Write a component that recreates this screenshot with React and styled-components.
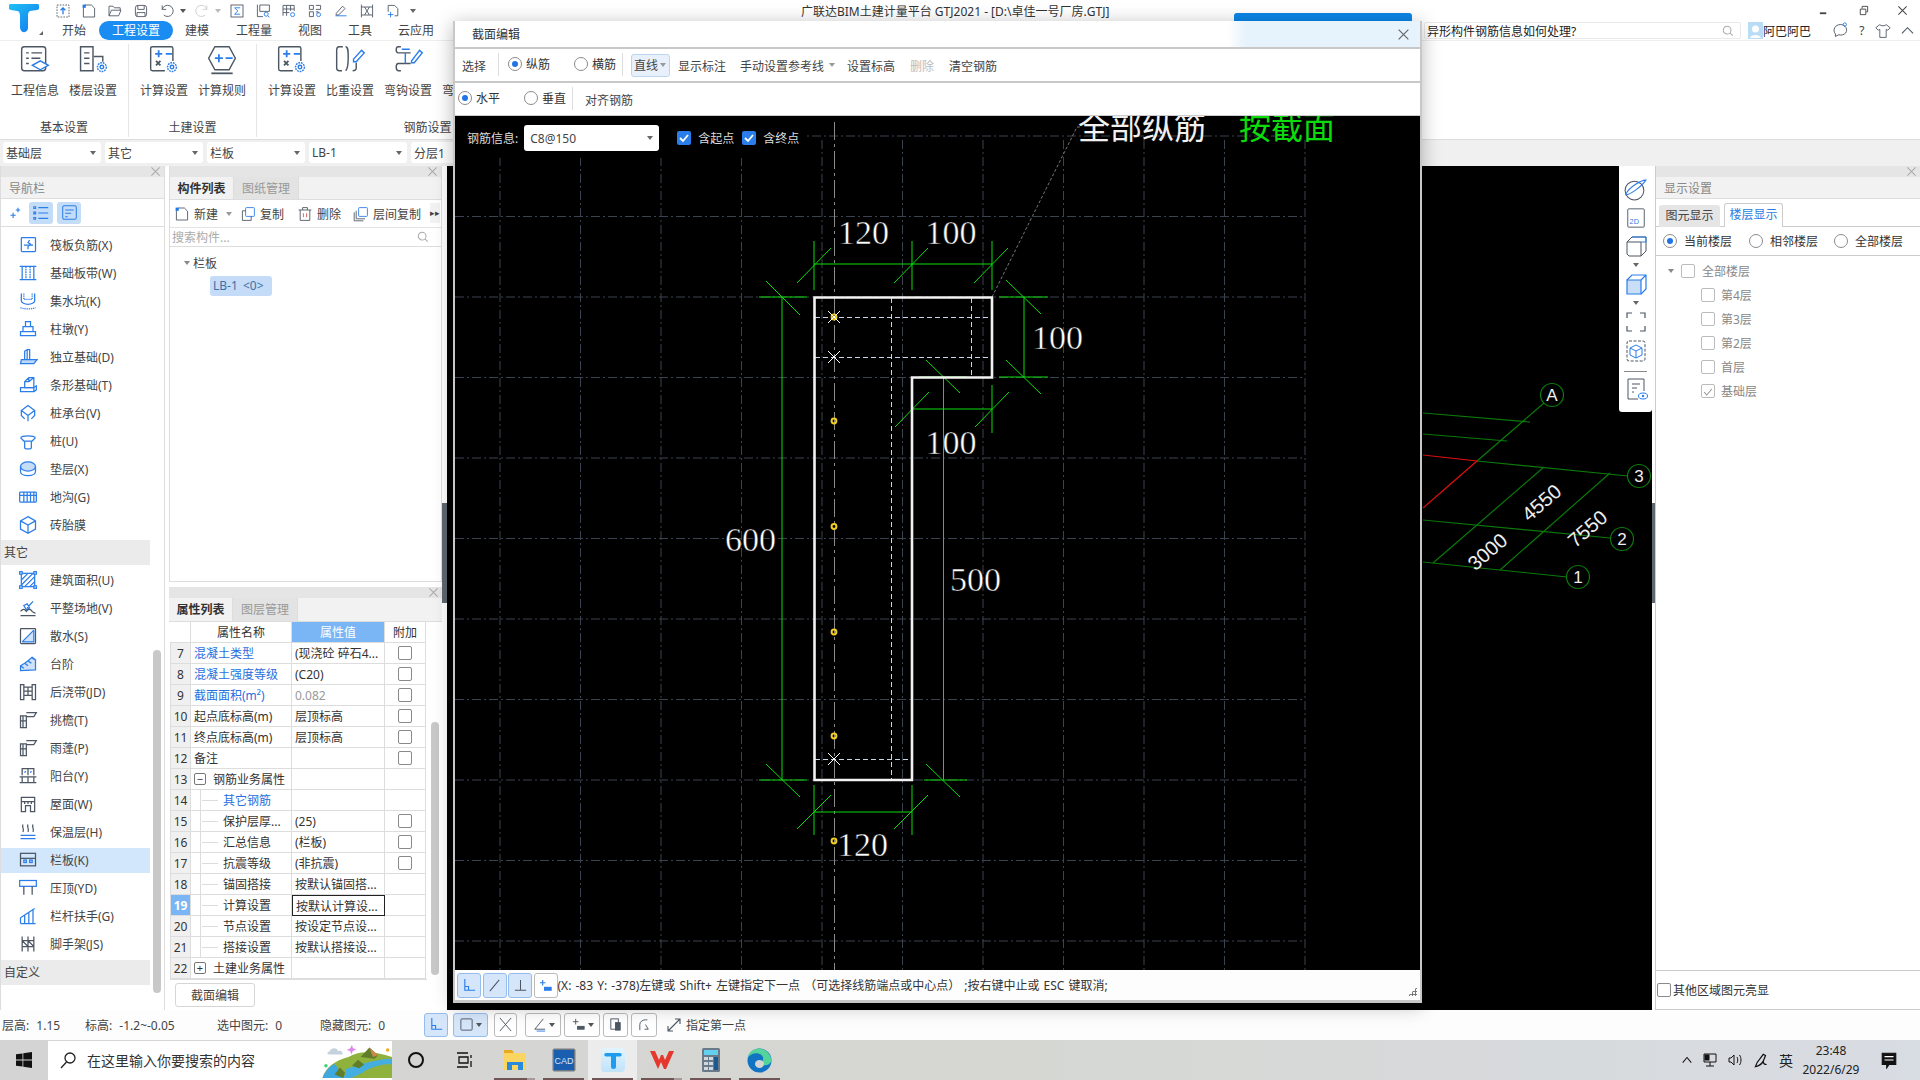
import React from 'react'
import styled, { createGlobalStyle } from 'styled-components'

const FONT = '"Noto Sans", "Noto Sans CJK SC", sans-serif'
const BLUE = '#2b7de9'
const GREY = '#4d5663'

const Global = createGlobalStyle`
html, body { margin: 0; padding: 0; background: #fff; }
* { box-sizing: border-box; }
`

const Screen = styled.div`
position: relative;
width: 1920px;
height: 1080px;
overflow: hidden;
display: flex;
flex-direction: column;
font-family: ${FONT};
font-size: 12px;
color: #444;
background: #fff;
`

/* ---- small bits ---- */
const Glyph = styled.svg.attrs((p) => ({ viewBox: p.$box || '0 0 24 24', fill: 'none' }))`
width: ${(p) => p.$size || 20}px;
height: ${(p) => p.$size || 20}px;
flex: none;
stroke: ${(p) => p.$color || BLUE};
stroke-width: ${(p) => p.$sw || 1.5};
`
const Caret = styled.i`
flex: none;
width: 0;
height: 0;
margin-left: ${(p) => p.$ml || 0}px;
border-left: 3px solid transparent;
border-right: 3px solid transparent;
border-top: 4px solid ${(p) => p.$color || '#666'};
`
const Cross = ({ size = 11, color = '#aaa' }) => (
  <Glyph $box="0 0 12 12" $size={size} $color={color} $sw={1.1}>
    <path d="M1.5 1.5l9 9M10.5 1.5l-9 9" />
  </Glyph>
)
const RadioRing = styled.span`
flex: none;
width: 14px;
height: 14px;
border-radius: 50%;
border: 1px solid #8c8c8c;
background: #fff;
display: flex;
align-items: center;
justify-content: center;
&::after {
  content: '';
  display: ${(p) => (p.$on ? 'block' : 'none')};
  width: 6px;
  height: 6px;
  border-radius: 50%;
  background: #2274e6;
}
`
const RadioItem = styled.label`
display: flex;
align-items: center;
gap: ${(p) => p.$gap || 4}px;
margin-left: ${(p) => p.$ml || 0}px;
color: #333;
`
const Radio = ({ on, ml, gap, children }) => (
  <RadioItem $ml={ml} $gap={gap}>
    <RadioRing $on={on} />
    {children}
  </RadioItem>
)
const Box = styled.span`
flex: none;
display: block;
width: 14px;
height: 14px;
border-radius: 2px;
border: 1px solid ${(p) => p.$line || '#8a8a8a'};
background: #fff;
`

/* ---- title + ribbon ---- */
const Top = styled.header`
position: relative;
height: 41px;
flex: none;
display: flex;
border-bottom: 1px solid #eee;
`
const Logo = styled.div`
width: 50px;
padding: 4px 0 0 9px;
flex: none;
position: relative;
&::after {
  content: '';
  position: absolute;
  left: 39px;
  top: 31px;
  border-left: 4px solid transparent;
  border-bottom: 4px solid #666;
}
`
const TopBody = styled.div`
flex: 1;
display: flex;
flex-direction: column;
`
const QuickRow = styled.div`
height: 21px;
display: flex;
align-items: center;
`
const QuickSlot = styled.span`
width: ${(p) => (p.$wide ? 35 : 26)}px;
display: flex;
justify-content: ${(p) => (p.$wide ? 'flex-start' : 'center')};
padding-left: ${(p) => (p.$wide ? 5 : 0)}px;
align-items: center;
gap: 2px;
`
const AppTitle = styled.div`
margin-left: 385px;
width: 340px;
font-size: 12px;
color: #333;
white-space: nowrap;
`
const WinButtons = styled.div`
margin-left: auto;
width: 102px;
padding-right: 12px;
display: flex;
align-items: center;
justify-content: space-between;
`
const TabRow = styled.div`
height: 19px;
display: flex;
align-items: center;
`
const Tab = styled.span`
height: 19px;
line-height: 20px;
padding: 0 ${(p) => (p.$active ? 13 : 0)}px;
margin-left: ${(p) => p.$ml}px;
border-radius: 10px;
white-space: nowrap;
background: ${(p) => (p.$active ? '#1a8cf2' : 'transparent')};
color: ${(p) => (p.$active ? '#fff' : '#444')};
`
const HelpBar = styled.div`
margin-left: auto;
display: flex;
align-items: center;
padding-right: 6px;
`
const HelpSearch = styled.div`
width: 317px;
height: 17px;
border: 1px solid #eaeaea;
border-radius: 2px;
padding: 0 6px 0 2px;
display: flex;
align-items: center;
justify-content: space-between;
color: #222;
`
const UserChip = styled.div`
margin-left: 7px;
width: 84px;
display: flex;
align-items: center;
color: #222;
`
const Avatar = styled.span`
width: 15px;
height: 17px;
background: #b9dcf7;
display: flex;
justify-content: center;
align-items: center;
`
const HelpIcons = styled.div`
width: 82px;
display: flex;
align-items: center;
justify-content: space-between;
`
const NoticeEdge = styled.div`
position: absolute;
left: 1234px;
top: 13px;
width: 178px;
height: 8px;
background: #0b86e8;
border-radius: 3px 3px 0 0;
`
const Ribbon = styled.section`
flex: none;
height: 98px;
display: flex;
`
const RibbonGroup = styled.div`
width: ${(p) => p.$w}px;
flex: none;
border-right: 1px solid #e6e6e6;
margin: 3px 0 2px;
display: flex;
flex-direction: column;
align-items: center;
justify-content: space-between;
`
const RibbonItems = styled.div`
display: flex;
align-self: flex-start;
padding-left: 6px;
`
const RibbonItem = styled.div`
width: 58px;
display: flex;
flex-direction: column;
align-items: center;
gap: 5px;
white-space: nowrap;
`
const RibbonLabel = styled.div`
line-height: 18px;
`
const SelectorRow = styled.div`
flex: none;
height: 27px;
background: #f0f0f0;
border-top: 1px solid #ddd;
padding: 2px 0 0 3px;
display: flex;
gap: 4px;
`
const FloorSelect = styled.div`
width: 98px;
height: 21px;
background: #fff;
border-radius: 3px;
padding: 0 5px 0 3px;
display: flex;
align-items: center;
justify-content: space-between;
color: #444;
`

/* ---- main area ---- */
const Main = styled.main`
flex: none;
height: 844px;
display: flex;
`
const StripHead = styled.div`
height: 11px;
background: #e5e5e5;
display: flex;
align-items: center;
justify-content: flex-end;
padding-right: 3px;
flex: none;
`
const PanelTitle = styled.div`
height: 22px;
line-height: 23px;
padding-left: 8px;
background: #f2f2f2;
color: #888;
border-bottom: 1px solid #ddd;
flex: none;
`
const Nav = styled.nav`
position: relative;
width: 165px;
flex: none;
border-left: 1px solid #ddd;
border-right: 1px solid #ddd;
display: flex;
flex-direction: column;
`
const NavTools = styled.div`
height: 28px;
flex: none;
display: flex;
align-items: center;
padding-left: 8px;
gap: 4px;
border-bottom: 1px solid #ddd;
`
const NavToolBtn = styled.span`
width: 24px;
height: 22px;
border-radius: 3px;
background: ${(p) => (p.$on ? '#c3dcf7' : 'transparent')};
margin-left: ${(p) => p.$ml || 0}px;
display: flex;
align-items: center;
justify-content: center;
`
const NavList = styled.div`
padding-top: 4px;
`
const NavRow = styled.div`
width: 149px;
padding-left: 17px;
display: flex;
align-items: center;
gap: 12px;
white-space: nowrap;
color: #444;
background: ${(p) => (p.$on ? '#d2e6fc' : 'transparent')};
height: ${(p) => (p.$on ? 25 : 28)}px;
margin: ${(p) => (p.$on ? '1.5px 0' : 0)};
`
const NavHead = styled.div`
height: 25px;
width: 149px;
background: #ebebeb;
line-height: 25px;
padding-left: 3px;
margin: ${(p) => p.$m || 0};
`
const NavScroll = styled.div`
position: absolute;
right: 3px;
top: 484px;
width: 8px;
height: 343px;
border-radius: 4px;
background: #c8c8c8;
`
const Middle = styled.div`
width: 273px;
flex: none;
margin-left: 4px;
display: flex;
flex-direction: column;
`
const ComponentPane = styled.section`
height: 416px;
flex: none;
display: flex;
flex-direction: column;
border: 1px solid #ddd;
border-top: 0;
`
const PaneTabs = styled.div`
height: ${(p) => p.$h || 23}px;
flex: none;
display: flex;
background: #f2f2f2;
border-bottom: 1px solid #ddd;
`
const PaneTab = styled.span`
width: ${(p) => (p.$on ? 64 : 65)}px;
text-align: center;
line-height: 24px;
font-weight: ${(p) => (p.$on ? 700 : 400)};
color: ${(p) => (p.$on ? '#333' : '#999')};
background: ${(p) => (p.$on ? '#f2f2f2' : '#e3e3e3')};
border-right: 1px solid #ddd;
`
const PaneTools = styled.div`
height: 28px;
flex: none;
display: flex;
align-items: center;
padding-left: 4px;
border-bottom: 1px solid #e4e4e4;
position: relative;
`
const PaneTool = styled.span`
display: flex;
align-items: center;
gap: 4px;
margin-left: ${(p) => p.$ml || 0}px;
white-space: nowrap;
`
const MoreTab = styled.span`
position: absolute;
right: 1px;
top: 3px;
width: 10px;
height: 20px;
background: #f2f2f2;
font-size: 9px;
line-height: 20px;
text-align: center;
`
const SearchRow = styled.div`
height: 19px;
flex: none;
display: flex;
align-items: center;
justify-content: space-between;
padding: 0 12px 0 2px;
color: #aaa;
border-bottom: 1px solid #ddd;
`
const TreeHead = styled.div`
padding: 5px 0 0 14px;
display: flex;
align-items: center;
gap: 3px;
height: 26px;
`
const Chip = styled.div`
margin: 3px 0 0 40px;
width: 62px;
height: 20px;
line-height: 20px;
padding-left: 3px;
border-radius: 3px;
background: #c4dcf8;
color: #3f6ea5;
word-spacing: 2px;
`
const PropPane = styled.section`
position: relative;
margin-top: 5px;
flex: 1;
display: flex;
flex-direction: column;
`
const PropTable = styled.div`
display: grid;
grid-template-columns: 21px 101px 93px 41px;
width: 257px;
margin-left: 1px;
border-bottom: 1px solid #ddd;
`
const HeadCell = styled.div`
height: 21px;
line-height: 21px;
text-align: center;
color: ${(p) => (p.$on ? '#fff' : '#333')};
background: ${(p) => (p.$on ? '#7ab5f5' : '#fff')};
border-right: 1px solid #ddd;
border-bottom: 1px solid #ddd;
`
const NumCell = styled.div`
height: 21px;
line-height: 21px;
text-align: center;
font-weight: ${(p) => (p.$on ? 700 : 400)};
color: ${(p) => (p.$on ? '#fff' : '#333')};
background: ${(p) => (p.$on ? '#7ab5f5' : '#f0f0f0')};
border: 1px solid #ddd;
border-top: 0;
`
const NameCell = styled.div`
height: 21px;
line-height: 21px;
padding-left: ${(p) => (p.$indent ? 32 : p.$group ? 22 : 3)}px;
color: ${(p) => (p.$link ? '#2a6fe0' : '#333')};
border-right: 1px solid #ddd;
border-bottom: 1px solid #ddd;
white-space: nowrap;
overflow: hidden;
position: relative;
&::before {
  content: '';
  display: ${(p) => (p.$indent ? 'block' : 'none')};
  position: absolute;
  left: 9px;
  top: 0;
  height: 21px;
  width: 17px;
  border-left: 1px solid #ddd;
  background: linear-gradient(#ddd, #ddd) 1px 10px / 100% 1px no-repeat;
}
`
const Fold = styled.span`
position: absolute;
left: 3px;
top: 4px;
width: 12px;
height: 12px;
border: 1px solid #777;
border-radius: 2px;
font-size: 11px;
line-height: 9px;
text-align: center;
background: #fff;
`
const ValueCell = styled.div`
height: 21px;
line-height: 21px;
padding-left: 3px;
white-space: nowrap;
overflow: hidden;
color: ${(p) => (p.$muted ? '#999' : '#333')};
border: ${(p) => (p.$on ? '1px solid #222' : 'none')};
border-right: 1px solid ${(p) => (p.$on ? '#222' : '#ddd')};
border-bottom: 1px solid ${(p) => (p.$on ? '#222' : '#ddd')};
`
const AddCell = styled.div`
height: 21px;
display: flex;
align-items: center;
justify-content: center;
border-right: 1px solid #ddd;
border-bottom: 1px solid #ddd;
`
const PropScroll = styled.div`
position: absolute;
right: 3px;
top: 135px;
width: 8px;
height: 253px;
border-radius: 4px;
background: #c8c8c8;
`
const EditButton = styled.div`
margin: 3px 0 0 6px;
width: 80px;
height: 24px;
line-height: 23px;
text-align: center;
border: 1px solid #d6d6d6;
border-radius: 3px;
background: #fff;
`
const Splitter = styled.div`
width: ${(p) => p.$w}px;
flex: none;
display: flex;
align-items: center;
&::after {
  content: '';
  display: block;
  width: 100%;
  height: 100px;
  margin-top: -70px;
  background: #5f6770;
}
`
const BlackView = styled.div`
position: relative;
flex: 1;
background: #000;
`
const AxisSvg = styled.svg`
position: absolute;
left: 0;
top: 0;
display: block;
`
const ViewTools = styled.div`
position: absolute;
right: 0;
top: 0;
width: 33px;
height: 246px;
background: #fff;
border-radius: 0 0 3px 3px;
padding-top: 11px;
display: flex;
flex-direction: column;
align-items: center;
gap: 5px;
`
const ViewRule = styled.div`
width: 23px;
height: 1px;
background: #888;
margin-top: 3px;
`
const RightPanel = styled.aside`
width: 265px;
flex: none;
border-left: 1px solid #ccc;
display: flex;
flex-direction: column;
`
const DisplayTabs = styled.div`
height: 28px;
flex: none;
padding: 5px 0 0 3px;
display: flex;
align-items: flex-end;
gap: 4px;
border-bottom: 1px solid #ccc;
`
const DisplayTab = styled.span`
height: ${(p) => (p.$on ? 24 : 22)}px;
width: ${(p) => (p.$on ? 59 : 61)}px;
line-height: 22px;
text-align: center;
color: ${(p) => (p.$on ? '#2a7de1' : '#444')};
background: ${(p) => (p.$on ? '#fff' : '#e5e5e5')};
border: ${(p) => (p.$on ? '1px solid #ccc' : '0')};
border-bottom: 0;
border-radius: 3px 3px 0 0;
margin-bottom: -1px;
`
const FloorRadios = styled.div`
height: 29px;
flex: none;
display: flex;
align-items: center;
padding-left: 7px;
border-bottom: 1px solid #ccc;
`
const FloorTree = styled.div`
flex: 1;
padding-top: 3px;
color: #888;
border-bottom: 1px solid #ccc;
`
const FloorRow = styled.div`
height: 24px;
display: flex;
align-items: center;
gap: ${(p) => (p.$root ? 7 : 6)}px;
padding-left: ${(p) => (p.$root ? 12 : 45)}px;
`
const FloorBottom = styled.div`
height: 39px;
flex: none;
display: flex;
align-items: center;
gap: 2px;
padding-left: 1px;
border-bottom: 1px solid #ccc;
color: #333;
`

/* ---- dialog ---- */
const Dialog = styled.div`
position: absolute;
left: 453px;
top: 21px;
width: 969px;
height: 982px;
background: #fff;
border: 2px solid #c8c8c8;
border-top: 0;
border-bottom-width: 3px;
box-shadow: 0 3px 18px rgba(0, 0, 0, 0.28);
display: flex;
flex-direction: column;
`
const DialogHead = styled.div`
height: 26px;
flex: none;
display: flex;
align-items: center;
justify-content: space-between;
padding: 0 10px 0 17px;
color: #333;
background: linear-gradient(90deg, #fff 0, #fff 80%, #e6f2fc 82%, #e6f2fc 100%);
`
const DialogRow = styled.div`
height: 34px;
flex: none;
display: flex;
align-items: center;
padding-left: ${(p) => p.$pl}px;
border-top: 2px solid #c8c8c8;
white-space: nowrap;
label {
  margin-top: -2px;
}
`
const RowText = styled.span`
margin-left: ${(p) => p.$ml || 0}px;
color: ${(p) => (p.$off ? '#bbb' : '#444')};
margin-top: 2px;
`
const RowSep = styled.span`
align-self: stretch;
width: 1px;
background: #ddd;
margin: 4px 0 5px ${(p) => p.$ml}px;
`
const LineButton = styled.span`
margin-left: ${(p) => p.$ml}px;
width: 39px;
height: 23px;
border: 1px solid #bcd6ef;
border-radius: 3px;
background: #e8f1fb;
display: flex;
align-items: center;
gap: 2px;
padding-left: 2px;
`
const DrawArea = styled.div`
position: relative;
height: 855px;
flex: none;
background: #000;
border-top: 1px solid #ccc;
`
const DrawSvg = styled.svg`
display: block;
`
const SteelBar = styled.div`
position: absolute;
left: 0;
top: 0;
width: 350px;
height: 42px;
background: #000;
display: flex;
align-items: center;
padding: 2px 0 0 12px;
color: #ddd;
white-space: nowrap;
`
const SteelSelect = styled.div`
margin-left: 6px;
width: 135px;
height: 26px;
border-radius: 3px;
background: #fff;
color: #444;
display: flex;
align-items: center;
justify-content: space-between;
padding: 0 6px;
`
const CheckBlue = styled.span`
margin-left: ${(p) => p.$ml}px;
width: 14px;
height: 14px;
border-radius: 2px;
background: #2b7de9;
margin-right: 7px;
flex: none;
display: flex;
`
const HintBar = styled.div`
flex: none;
height: 30px;
display: flex;
align-items: center;
padding-left: 2px;
background: #fdfdfd;
color: #333;
white-space: pre;
word-spacing: 1px;
position: relative;
`
const SnapBtn = styled.span`
width: ${(p) => p.$w || 24}px;
height: ${(p) => p.$h || 24}px;
margin-right: ${(p) => p.$mr ?? 1.5}px;
flex: none;
border-radius: 3px;
border: 1px solid ${(p) => (p.$on ? '#94bdee' : '#bbb')};
background: ${(p) => (p.$on ? '#d6e6fa' : '#fff')};
display: flex;
align-items: center;
justify-content: center;
gap: 2px;
`
const Grip = styled.span`
position: absolute;
right: 3px;
bottom: 4px;
width: 9px;
height: 9px;
background-image: radial-gradient(#777 1px, transparent 1.2px);
background-size: 3px 3px;
clip-path: polygon(100% 0, 100% 100%, 0 100%);
`

/* ---- status + taskbar ---- */
const Status = styled.div`
flex: none;
height: 30px;
display: flex;
align-items: center;
background: #fdfdfd;
white-space: nowrap;
color: #444;
padding: 0 0 1px 2px;
`
const StatusText = styled.span`
width: ${(p) => p.$w}px;
flex: none;
word-spacing: 4px;
`
const StatusHint = styled.span`
margin-left: 4px;
`
const Taskbar = styled.footer`
flex: none;
height: 40px;
display: flex;
align-items: center;
background: linear-gradient(90deg, #d4d4d4, #d6d7d2 50%, #d8dce3);
color: #222;
`
const StartSlot = styled.div`
width: 48px;
display: flex;
justify-content: center;
`
const TaskSearch = styled.div`
width: 344px;
height: 39px;
margin-top: 1px;
background: #fff;
position: relative;
display: flex;
align-items: center;
gap: 10px;
padding: 0 0 2px 11px;
font-size: 14px;
overflow: hidden;
color: #333;
`
const Landscape = styled.svg`
position: absolute;
right: 0;
top: 0;
`
const TaskSlot = styled.div`
position: relative;
width: ${(p) => (p.$run ? 49 : 48)}px;
height: 40px;
flex: none;
display: flex;
align-items: center;
justify-content: center;
margin-left: ${(p) => p.$ml || 0}px;
background: ${(p) => (p.$on ? '#ececec' : 'transparent')};
&::after {
  content: '';
  display: ${(p) => (p.$run ? 'block' : 'none')};
  position: absolute;
  left: 4px;
  right: 4px;
  bottom: 0;
  height: 2px;
  background: ${(p) => (p.$multi ? 'linear-gradient(90deg, #6f5555 80%, #a89a9a 80%)' : '#6f5555')};
}
`
const Tray = styled.div`
margin-left: auto;
display: flex;
align-items: center;
gap: 9px;
padding-right: 22px;
`
const TrayIme = styled.span`
font-size: 14px;
`
const Clock = styled.div`
width: 72px;
margin: 0 4px 0 -7px;
text-align: center;
line-height: 19px;
`

/* ---- icons ---- */
const quick = [
  <><rect x="2.5" y="2.5" width="15" height="15" strokeDasharray="2 1.5" /><path d="M10 14V6M7 9l3-3 3 3" stroke="#1f7bea" strokeWidth="1.6" /></>,
  <><path d="M5 2.5h8l4 4v11H3v-13" /><rect x="2" y="2" width="4" height="4" fill="#1f7bea" stroke="none" /></>,
  <path d="M2.5 16V4h5l2 2h7v3M2.5 16l3-7h12l-3 7z" />,
  <><rect x="3" y="3" width="14" height="14" rx="3" /><path d="M6 3v5h8V3M5 17v-5h10v5" /></>,
  <path d="M4 3v5h5M4 8a7 7 0 1 1 2 7" />,
  <path d="M16 3v5h-5M16 8a7 7 0 1 0-2 7" stroke="#ccc" />,
  <><rect x="2.5" y="2.5" width="15" height="15" /><path d="M14 6H7l4 4-4 4h7" stroke="#1f7bea" /></>,
  <><path d="M3 2v15h7M6 2.500h12v8H6z" /><circle cx="14" cy="14" r="2.500" stroke="#1f7bea" /><path d="M16 16l2 2" stroke="#1f7bea" /></>,
  <><path d="M2.500 16V3h14v7M2.500 7.500h14M2.500 12h8M7 3v13M12 3v7" /><circle cx="14.500" cy="14.500" r="2.500" stroke="#1f7bea" /></>,
  <><path d="M3 3h5v5H3zM3 11h5v6H3zM11 11h3v2" /><circle cx="14.500" cy="14.500" r="2.500" stroke="#1f7bea" /><path d="M11 3h6v5h-6" /></>,
  <><path d="M3 16h14" stroke="#1f7bea" /><path d="M4 13l8-9 3 3-8 8H4z" /></>,
  <><path d="M3 2v16M17 2v16M3 5h14M3 15h14M7 5l6 10M7 15l6-10" /></>,
  <><path d="M4 11V3h8l4 4v9h-4" /><path d="M7 11v7M3.500 14.500h7" stroke="#1f7bea" /></>,
]
const ribbonShapes = {
  info: <><rect x="3" y="3" width="27" height="27" rx="3" /><path d="M8 10h3M14 10h12M8 16h3M14 16h10M8 22h3" /><path d="M24 19l9 5-9 5-9-5z" fill="#fff" stroke={BLUE} /></>,
  floor: <><path d="M19 30H4V3h14v27M19 14h10v6" /><path d="M8 10h6M8 16h6M8 22h6" /><circle cx="28" cy="26" r="5" stroke={BLUE} strokeDasharray="2 1" /><circle cx="28" cy="26" r="2" stroke={BLUE} /></>,
  calc: <><path d="M19 30H5a2 2 0 0 1-2-2V5a2 2 0 0 1 2-2h21a2 2 0 0 1 2 2v14" /><path d="M8 11h8M12 7v8M20 11h7" stroke={BLUE} strokeWidth="2" /><path d="M9 19l5 5M14 19l-5 5" strokeWidth="2" /><circle cx="27" cy="26" r="5" stroke={BLUE} strokeDasharray="2 1" /><circle cx="27" cy="26" r="2" stroke={BLUE} /></>,
  rule: <><path d="M10 3h16l7 13-7 13H10L3 16z" /><path d="M10 16h9M14.500 11.500v9M22 16h8" stroke={BLUE} strokeWidth="2" /><path d="M6 33h24" strokeWidth="2" /></>,
  weight: <><path d="M10 3H6c-2 0-3 2-3 4v20c0 2 1 3 3 3h3" /><path d="M13 3c3 0 3 5 3 12s0 13-3 15" /><path d="M21 30c3 0 4-1 4-3v-6" /><path d="M22 17l9-10 3 3-9 10h-3z" stroke={BLUE} /></>,
  hook: <><path d="M10 3H7c-3 0-3 7 0 7h14M10 30H7c-3 0-3-8 0-8h14" /><path d="M15 10v12M11 6h9" stroke={BLUE} /><path d="M22 19l9-12 3 3-9 11h-3z" stroke={BLUE} /></>,
}
const navShapes = {
  raft: <><rect x="4" y="3" width="17" height="17" rx="1" /><path d="M7 12h11M14 6l-2 3 3 2-3 3v3" /></>,
  band: <><path d="M2 4h20M2 20h20M5 4v16M19 4v16" /><path d="M9.500 4v16M14.500 4v16" strokeDasharray="2 1" /></>,
  pit: <><path d="M4 3v9c0 2 4 4 8 4s8-2 8-4V3" /><path d="M7 3v7h10V3M3 20c5 2 13 2 18 0" strokeDasharray="1.500 1" /></>,
  pier: <><path d="M9 3h6v6H9zM6 9h12v6H6zM3 15h18v5H3z" /></>,
  found: <><path d="M8 5l3-2h3v12H8zM11 3v12" /><path d="M4 15h19l-4 5H3z" fill="#bcd8f7" /></>,
  strip: <><path d="M8 8l5-5h6v12H8zM13 3v5H8M19 3l-6 5" /><path d="M8 15h11v5H3v-5zM19 15l3-2v5l-3 2" /></>,
  cap: <><path d="M12 3l8 6-8 6-8-6zM4 9v6l4 4M20 9v6l-4 4M12 15v7" /></>,
  pile: <><path d="M3 8c2-3 16-3 18 0M3 8l4 4h10l4-4M8 12v8c0 2 8 2 8 0v-8" /></>,
  cushion: <><ellipse cx="12" cy="9" rx="9" ry="5.500" fill="#c4dcf8" /><path d="M3 9v6c0 3 4 5 9 5s9-2 9-5V9" /></>,
  ditch: <><rect x="2" y="6" width="20" height="12" rx="1" /><path d="M2 10h20M7 6v12M11 6v12M15 6v12M19 6v12" /></>,
  mold: <><path d="M12 2l9 5v10l-9 5-9-5V7zM3 7l9 5 9-5M12 12v10" /></>,
  area: <><rect x="4" y="4" width="16" height="16" /><path d="M4 12l8-8M4 18L18 4M8 20L20 8M14 20l6-6" /><rect x="2" y="2" width="3" height="3" fill="#fff" /><rect x="19" y="2" width="3" height="3" fill="#fff" /><rect x="2" y="19" width="3" height="3" fill="#fff" /><rect x="19" y="19" width="3" height="3" fill="#fff" /></>,
  level: <><path d="M11 12l7-8M7 9l4-2 3 5-4 2z" /><path d="M3 16c3-3 5-3 7 0 2-3 5-3 7 0 1 1 3 2 4 2M3 21h18" stroke={GREY} /></>,
  apron: <><rect x="3" y="3" width="18" height="18" rx="1" stroke={GREY} /><path d="M5 19L19 5M5 19h14V5" fill="#cfe2f9" /></>,
  steps: <><path d="M3 14l5-3 4-3 5-4 4 3v12l-18 1z" fill="#cfe2f9" /><path d="M3 14l4 3M8 11l4 3M12 8l4 3M16 4l4 3" /></>,
  strip2: <><path d="M3 3h4v18H3zM17 3h4v18h-4zM7 6h10M7 11h10M7 16h10M12 6v10" stroke={GREY} /></>,
  eave: <><path d="M3 7h3v14H3zM6 7h4v14H6zM3 13h7M10 3h12l-3 5h-9" stroke={GREY} /></>,
  balcony: <><path d="M5 11V3h14v8M12 3v8M2 13h20M2 20h20M5 13v7M12 13v7M19 13v7" stroke={GREY} /><path d="M8 8l1-2M15 8l1-2" /></>,
  roof: <><path d="M4 4h16v17h-5v-7H9v7H4zM4 9h16" stroke={GREY} /><path d="M8 9v3M12 9v3M16 9v3" stroke={GREY} /></>,
  insul: <><path d="M6 3c-2 3 2 5 0 9M12 3c-2 3 2 5 0 9M18 3c-2 3 2 5 0 9" stroke={GREY} /><path d="M3 16h18M3 20h18" /></>,
  rail: <><rect x="3" y="4" width="18" height="15" stroke={GREY} /><path d="M3 10h18" stroke={GREY} /><rect x="7" y="12" width="3" height="3" /><rect x="14" y="12" width="3" height="3" /></>,
  coping: <><rect x="2" y="3" width="20" height="7" /><path d="M7 10v10M17 10v10" stroke={GREY} /></>,
  handrail: <><path d="M3 14L20 3M3 21V14M8 21V11M13 21V8M18 21V5M3 21h18" /></>,
  scaffold: <><path d="M5 3v18M12 3v18M19 3v18M5 8h14M5 15h14M5 8l7 7M12 8l7 7" stroke={GREY} /></>,
}
const navTop = [
  ['raft', '筏板负筋(X)'], ['band', '基础板带(W)'], ['pit', '集水坑(K)'], ['pier', '柱墩(Y)'], ['found', '独立基础(D)'],
  ['strip', '条形基础(T)'], ['cap', '桩承台(V)'], ['pile', '桩(U)'], ['cushion', '垫层(X)'], ['ditch', '地沟(G)'], ['mold', '砖胎膜'],
]
const navOther = [
  ['area', '建筑面积(U)'], ['level', '平整场地(V)'], ['apron', '散水(S)'], ['steps', '台阶'], ['strip2', '后浇带(JD)'], ['eave', '挑檐(T)'],
  ['eave', '雨蓬(P)'], ['balcony', '阳台(Y)'], ['roof', '屋面(W)'], ['insul', '保温层(H)'], ['rail', '栏板(K)', true], ['coping', '压顶(YD)'],
  ['handrail', '栏杆扶手(G)'], ['scaffold', '脚手架(JS)'],
]
const rows = [
  [7, '混凝土类型', '(现浇砼 碎石4...', { link: 1, box: 1 }],
  [8, '混凝土强度等级', '(C20)', { link: 1, box: 1 }],
  [9, <>截面面积(m²)</>, '0.082', { link: 1, box: 1, muted: 1 }],
  [10, '起点底标高(m)', '层顶标高', { box: 1 }],
  [11, '终点底标高(m)', '层顶标高', { box: 1 }],
  [12, '备注', '', { box: 1 }],
  [13, '钢筋业务属性', '', { group: '−' }],
  [14, '其它钢筋', '', { indent: 1, link: 1 }],
  [15, '保护层厚...', '(25)', { indent: 1, box: 1 }],
  [16, '汇总信息', '(栏板)', { indent: 1, box: 1 }],
  [17, '抗震等级', '(非抗震)', { indent: 1, box: 1 }],
  [18, '锚固搭接', '按默认锚固搭...', { indent: 1 }],
  [19, '计算设置', '按默认计算设...', { indent: 1, on: 1 }],
  [20, '节点设置', '按设定节点设...', { indent: 1 }],
  [21, '搭接设置', '按默认搭接设...', { indent: 1 }],
  [22, '土建业务属性', '', { group: '+' }],
]

const gridX = [500, 580.5, 661, 741.5, 822, 902.5, 983, 1063.5, 1144, 1224.5, 1305]
const gridY = [136, 216.5, 297, 377.5, 458, 538.5, 619, 699.5, 780, 860.5, 941]
const rebarDots = [317, 421, 526.5, 632, 736, 841]
const marks = [317, 357, 759]

// dimension line pieces, page coordinates
const greenLines = [
  [814, 264, 992, 264], [814, 241, 814, 290], [831, 248, 797, 283], [912, 241, 912, 290], [928, 248, 894, 283], [992, 241, 992, 290], [1008, 248, 974, 283],
  [782, 297, 782, 780], [759, 297, 807, 297], [766, 281, 800, 315], [759, 780, 807, 780], [766, 764, 800, 797],
  [1024, 297, 1024, 377], [999, 297, 1048, 297], [999, 377, 1048, 377], [1006, 280, 1041, 314], [1006, 360, 1041, 394],
  [919, 377, 967, 377], [943.5, 377, 943.5, 780], [926, 360, 960, 393], [924, 780, 967, 780], [926, 764, 960, 797],
  [912, 409, 992, 409], [912, 385, 912, 433], [992, 385, 992, 433], [929, 392, 895, 427], [1009, 392, 975, 427],
  [814, 812, 912, 812], [814, 785, 814, 835], [912, 785, 912, 835], [831, 795, 797, 829], [928, 795, 894, 829],
]

const SectionDrawing = () => (
  <DrawSvg width="965" height="854" viewBox="455 116 965 854">
    <g stroke="#3c4350" strokeWidth="1" strokeDasharray="9 3 2 3">
      {gridX.map((x) => <line key={x} x1={x} y1="140" x2={x} y2="970" />)}
      {gridY.map((y) => <line key={y} x1="455" y1={y} x2="1305" y2={y} />)}
    </g>
    <line x1="834.500" y1="122" x2="834.500" y2="970" stroke="#8a8a8a" strokeDasharray="18 4 3 4" />
    <path d="M992 297L1077 127H1082" stroke="#777" fill="none" strokeDasharray="3 2" />
    <g stroke="#c9d6ea" strokeDasharray="5 3">
      <line x1="815" y1="317.500" x2="992" y2="317.500" />
      <line x1="815" y1="357.500" x2="992" y2="357.500" />
      <line x1="815" y1="759.500" x2="912" y2="759.500" />
      <line x1="891.500" y1="298" x2="891.500" y2="780" />
      <line x1="971.500" y1="298" x2="971.500" y2="377" />
    </g>
    <g stroke="#0cdc0c" strokeWidth="1">
      {greenLines.map((l, i) => <line key={i} x1={l[0]} y1={l[1]} x2={l[2]} y2={l[3]} />)}
    </g>
    <path d="M814.500 297.500H992V377.500H912V780H814.500Z" fill="none" stroke="#f2f2f2" strokeWidth="2.600" />
    {rebarDots.map((y) => <circle key={y} cx="834" cy={y} r="2.400" fill="none" stroke="#f2cf1d" strokeWidth="2" />)}
    <g stroke="#fff" strokeWidth="1">
      {marks.map((y) => <path key={y} d={`M828 ${y - 6}l12 12M840 ${y - 6}l-12 12`} />)}
    </g>
    <g fill="#fff" fontFamily='"Liberation Serif", serif' fontSize="34" stroke="#000" strokeWidth="0.500" paintOrder="fill">
      <text x="838" y="244">120</text>
      <text x="925.500" y="244">100</text>
      <text x="1032" y="349">100</text>
      <text x="925.500" y="454">100</text>
      <text x="725" y="551">600</text>
      <text x="950" y="591">500</text>
      <text x="837" y="856">120</text>
    </g>
    <g fontFamily='"Noto Sans CJK SC", sans-serif' fontSize="32">
      <text x="1078" y="139" fill="#f0f0f0">全部纵筋</text>
      <text x="1239" y="139" fill="#0cdc0c">按截面</text>
    </g>
  </DrawSvg>
)

const Bubble = ({ x, y, t }) => (
  <g>
    <circle cx={x} cy={y} r="11.500" fill="#000" stroke="#0a7a0a" strokeWidth="1.200" />
    <text x={x} y={y + 6} fill="#eee" fontSize="17" textAnchor="middle">{t}</text>
  </g>
)

const AxisDrawing = () => (
  <AxisSvg width="1205" height="844" viewBox="447 166 1205 844" fontFamily='"Liberation Sans", sans-serif'>
    <g stroke="#0a7a0a" strokeWidth="1.200">
      <line x1="1544" y1="403" x2="1477" y2="461" />
      <line x1="1544" y1="467" x2="1433" y2="563" />
      <line x1="1610" y1="473" x2="1500" y2="570" />
      <line x1="1477" y1="461" x2="1628" y2="476" />
      <line x1="1423" y1="520" x2="1610" y2="538" />
      <line x1="1423" y1="562" x2="1567" y2="577" />
      <line x1="1423" y1="413" x2="1530" y2="422" />
      <line x1="1423" y1="434" x2="1507" y2="441" />
    </g>
    <g stroke="#e01010" strokeWidth="1.200">
      <line x1="1423" y1="455" x2="1477" y2="461" />
      <line x1="1477" y1="461" x2="1423" y2="508" />
    </g>
    <Bubble x={1552} y={395} t="A" />
    <Bubble x={1639} y={476} t="3" />
    <Bubble x={1622} y={539} t="2" />
    <Bubble x={1578} y={577} t="1" />
    <g fill="#eee" fontSize="20" textAnchor="middle">
      <text transform="translate(1546 508) rotate(-41)">4550</text>
      <text transform="translate(1592 534) rotate(-41)">7550</text>
      <text transform="translate(1492 557) rotate(-41)">3000</text>
    </g>
  </AxisSvg>
)

const RibbonIcon = ({ name }) => (
  <Glyph $box="0 0 36 36" $size={32} $color={GREY} $sw={1.600}>{ribbonShapes[name]}</Glyph>
)
const RibbonCell = ({ icon, label }) => (
  <RibbonItem>
    <RibbonIcon name={icon} />
    {label}
  </RibbonItem>
)

const App = () => (
  <Screen>
    <Global />
    <Top>
      <Logo>
        <svg width="30" height="29" viewBox="0 0 30 29">
          <defs>
            <linearGradient id="tg" x1="0" y1="0" x2="1" y2="1">
              <stop offset="0" stopColor="#1fc2f5" />
              <stop offset="1" stopColor="#1474ee" />
            </linearGradient>
          </defs>
          <path d="M3 0h24a3 3 0 0 1 1 6l-7 1c-2 1-2 3-2 5v12c0 5-7 6-8 0V12c0-3-1-5-3-5l-6-1a3 3 0 0 1 1-6z" fill="url(#tg)" />
        </svg>
      </Logo>
      <TopBody>
        <QuickRow>
          {quick.map((q, i) => (
            <QuickSlot key={i} $wide={i === 4 || i === 5}>
              <Glyph $box="0 0 20 20" $size={16} $color={GREY} $sw={1.100}>{q}</Glyph>
              {(i === 4 || i === 5) && <Caret $ml={3} $color={i === 4 ? '#555' : '#bbb'} />}
            </QuickSlot>
          ))}
          <Caret $ml={4} />
          <AppTitle>广联达BIM土建计量平台 GTJ2021 - [D:\卓佳一号厂房.GTJ]</AppTitle>
          <WinButtons>
            <Glyph $box="0 0 12 12" $size={11} $color="#444"><path d="M2 9h7" strokeWidth="2" /></Glyph>
            <Glyph $box="0 0 12 12" $size={11} $color="#444" $sw={1}><path d="M2.500 4.500h6v6h-6zM4.500 4V1.500h6v6H9" /></Glyph>
            <Cross color="#444" />
          </WinButtons>
        </QuickRow>
        <TabRow>
          <Tab $ml={12}>开始</Tab>
          <Tab $ml={13} $active>工程设置</Tab>
          <Tab $ml={12}>建模</Tab>
          <Tab $ml={27}>工程量</Tab>
          <Tab $ml={26}>视图</Tab>
          <Tab $ml={26}>工具</Tab>
          <Tab $ml={26}>云应用</Tab>
          <HelpBar>
            <HelpSearch>
              异形构件钢筋信息如何处理?
              <Glyph $box="0 0 14 14" $size={12} $color="#aaa" $sw={1.200}><circle cx="6" cy="6" r="4.500" /><path d="M9.500 9.500l3 3" /></Glyph>
            </HelpSearch>
            <UserChip>
              <Avatar>
                <svg width="11" height="14" viewBox="0 0 11 14"><circle cx="5.500" cy="5" r="3.500" fill="#fff" /><path d="M0 14c1-4 10-4 11 0z" fill="#fff" /></svg>
              </Avatar>
              阿巴阿巴
            </UserChip>
            <HelpIcons>
              <Glyph $box="0 0 20 20" $size={17} $color={GREY} $sw={1.100}><path d="M4 14c-4-5 0-11 6-11s9 6 6 10c-2 2-5 3-8 2l-4 2z" /><circle cx="15" cy="3" r="2" stroke={BLUE} /><path d="M7 9h0M10 9h0M13 9h0" strokeWidth="1.500" /></Glyph>
              <span>?</span>
              <Glyph $box="0 0 20 20" $size={16} $color={GREY} $sw={1.100}><path d="M6 2L1 6l3 3 2-1v10h8V8l2 1 3-3-5-4c-1 2-7 2-8 0z" /></Glyph>
              <Glyph $box="0 0 14 14" $size={13} $color={GREY} $sw={1.200}><path d="M1 10l6-6 6 6" /></Glyph>
            </HelpIcons>
          </HelpBar>
        </TabRow>
      </TopBody>
      <NoticeEdge />
    </Top>
    <Ribbon>
      <RibbonGroup $w={129}>
        <RibbonItems>
          <RibbonCell icon="info" label="工程信息" />
          <RibbonCell icon="floor" label="楼层设置" />
        </RibbonItems>
        <RibbonLabel>基本设置</RibbonLabel>
      </RibbonGroup>
      <RibbonGroup $w={128}>
        <RibbonItems>
          <RibbonCell icon="calc" label="计算设置" />
          <RibbonCell icon="rule" label="计算规则" />
        </RibbonItems>
        <RibbonLabel>土建设置</RibbonLabel>
      </RibbonGroup>
      <RibbonGroup $w={342}>
        <RibbonItems>
          <RibbonCell icon="calc" label="计算设置" />
          <RibbonCell icon="weight" label="比重设置" />
          <RibbonCell icon="hook" label="弯钩设置" />
          <RibbonCell icon="hook" label="弯曲设置" />
        </RibbonItems>
        <RibbonLabel>钢筋设置</RibbonLabel>
      </RibbonGroup>
    </Ribbon>
    <SelectorRow>
      {['基础层', '其它', '栏板', 'LB-1', '分层1'].map((s) => (
        <FloorSelect key={s}>{s}<Caret /></FloorSelect>
      ))}
    </SelectorRow>
    <Main>
      <Nav>
        <StripHead><Cross /></StripHead>
        <PanelTitle>导航栏</PanelTitle>
        <NavTools>
          <Glyph $box="0 0 16 16" $size={12}><path d="M2 11h7M5.500 7.500v7M9 4h6M12 1v6" /></Glyph>
          <NavToolBtn $on $ml={4}>
            <Glyph $box="0 0 20 20" $size={18} $sw={1.200}><path d="M7 4h11M7 10h11M7 16h11" /><path d="M2 3h2v2H2zM2 9h2v2H2zM2 15h2v2H2z" /></Glyph>
          </NavToolBtn>
          <NavToolBtn $on>
            <Glyph $box="0 0 20 20" $size={17} $sw={1.200}><rect x="2" y="2" width="16" height="16" rx="2" /><path d="M5 7h10M5 11h7M5 15h3" /></Glyph>
          </NavToolBtn>
        </NavTools>
        <NavList>
          {navTop.map(([icon, label]) => (
            <NavRow key={label}><Glyph>{navShapes[icon]}</Glyph>{label}</NavRow>
          ))}
          <NavHead $m="1px 0 1px">其它</NavHead>
          {navOther.map(([icon, label, on]) => (
            <NavRow key={label} $on={on}><Glyph>{navShapes[icon]}</Glyph>{label}</NavRow>
          ))}
          <NavHead $m="2px 0 0">自定义</NavHead>
        </NavList>
        <NavScroll />
      </Nav>
      <Middle>
        <ComponentPane>
          <StripHead><Cross /></StripHead>
          <PaneTabs>
            <PaneTab $on>构件列表</PaneTab>
            <PaneTab>图纸管理</PaneTab>
          </PaneTabs>
          <PaneTools>
            <PaneTool>
              <Glyph $box="0 0 20 20" $size={16} $color={GREY} $sw={1.100}><path d="M5 2.500h8l4 4v11H3v-13" /><rect x="2" y="2" width="4" height="4" fill="#1f7bea" stroke="none" /></Glyph>
              新建<Caret $ml={4} $color="#999" />
            </PaneTool>
            <PaneTool $ml={8}>
              <Glyph $box="0 0 20 20" $size={16} $color={GREY} $sw={1.100}><rect x="7" y="2" width="11" height="11" rx="1" stroke={BLUE} /><path d="M7 6H3v12h11v-5" /></Glyph>
              复制
            </PaneTool>
            <PaneTool $ml={13}>
              <Glyph $box="0 0 20 20" $size={16} $color={GREY} $sw={1.100}><path d="M2 5h16M7 5V2h6v3M4 5v13h12V5" /><path d="M8 9v5M12 9v5" stroke="#d9534f" /></Glyph>
              删除
            </PaneTool>
            <PaneTool $ml={12}>
              <Glyph $box="0 0 20 20" $size={16} $color={GREY} $sw={1.100}><rect x="7" y="2" width="11" height="11" rx="1" stroke={BLUE} /><path d="M4 6v10h11M1.500 8v10.500H13" /></Glyph>
              层间复制
            </PaneTool>
            <MoreTab>▸▸</MoreTab>
          </PaneTools>
          <SearchRow>
            搜索构件...
            <Glyph $box="0 0 14 14" $size={12} $color="#aaa" $sw={1.200}><circle cx="6" cy="6" r="4.500" /><path d="M9.500 9.500l3 3" /></Glyph>
          </SearchRow>
          <TreeHead><Caret $color="#888" />栏板</TreeHead>
          <Chip>LB-1 &lt;0&gt;</Chip>
        </ComponentPane>
        <PropPane>
          <StripHead><Cross /></StripHead>
          <PaneTabs $h={24}>
            <PaneTab $on>属性列表</PaneTab>
            <PaneTab>图层管理</PaneTab>
          </PaneTabs>
          <PropTable>
            <HeadCell />
            <HeadCell>属性名称</HeadCell>
            <HeadCell $on>属性值</HeadCell>
            <HeadCell>附加</HeadCell>
            {rows.map(([n, name, val, o]) => (
              <React.Fragment key={n}>
                <NumCell $on={o.on}>{n}</NumCell>
                <NameCell $link={o.link} $indent={o.indent} $group={o.group}>
                  {o.group && <Fold>{o.group}</Fold>}
                  {name}
                </NameCell>
                <ValueCell $muted={o.muted} $on={o.on}>{val}</ValueCell>
                <AddCell>{o.box && <Box />}</AddCell>
              </React.Fragment>
            ))}
          </PropTable>
          <EditButton>截面编辑</EditButton>
          <PropScroll />
        </PropPane>
      </Middle>
      <Splitter $w={5} />
      <BlackView>
        <AxisDrawing />
        <ViewTools>
          <Glyph $box="0 0 24 24" $size={25} $color={GREY} $sw={1}><circle cx="11" cy="13" r="9" /><path d="M2 17c4 1 16-8 20-14-5 0-16 7-19 13" stroke={BLUE} /></Glyph>
          <Glyph $box="0 0 24 24" $size={22} $color={GREY} $sw={1}><rect x="3" y="2" width="18" height="20" rx="1" /><text x="5" y="19" fontSize="8" fill={BLUE} stroke="none" fontFamily="Liberation Sans">2D</text></Glyph>
          <Glyph $box="0 0 24 24" $size={24} $color={GREY} $sw={1}><path d="M3 8h14v14H5l-2-2zM3 8l5-5h14v14l-5 5" /><path d="M8 3h14v5H17" stroke={BLUE} /></Glyph>
          <Caret $color="#666" />
          <Glyph $box="0 0 24 24" $size={24} $sw={1.200}><path d="M3 8h14v14H3z" fill="#c9def7" /><path d="M3 8l5-5h14v14l-5 5M17 8l5-5" /></Glyph>
          <Caret $color="#666" />
          <Glyph $box="0 0 24 24" $size={24} $color={GREY} $sw={1.200}><path d="M3 8V3h5M16 3h5v5M21 16v5h-5M8 21H3v-5" /></Glyph>
          <Glyph $box="0 0 24 24" $size={24} $color={GREY} $sw={1}><rect x="3" y="2" width="18" height="20" rx="2" strokeDasharray="3 1.500" /><path d="M12 6l6 3v7l-6 3-6-3V9zM6 9l6 3 6-3M12 12v7" stroke={BLUE} /></Glyph>
          <ViewRule />
          <Glyph $box="0 0 24 24" $size={24} $color={GREY} $sw={1}><path d="M14 22H4V2h16v12M8 7h8M8 11h5M8 15h2" /><ellipse cx="19" cy="19" rx="4.500" ry="3" stroke={BLUE} /><circle cx="19" cy="19" r="1.200" fill={BLUE} stroke="none" /></Glyph>
        </ViewTools>
      </BlackView>
      <Splitter $w={3} />
      <RightPanel>
        <StripHead><Cross /></StripHead>
        <PanelTitle>显示设置</PanelTitle>
        <DisplayTabs>
          <DisplayTab>图元显示</DisplayTab>
          <DisplayTab $on>楼层显示</DisplayTab>
        </DisplayTabs>
        <FloorRadios>
          <Radio on gap={7}>当前楼层</Radio>
          <Radio ml={17} gap={7}>相邻楼层</Radio>
          <Radio ml={16} gap={7}>全部楼层</Radio>
        </FloorRadios>
        <FloorTree>
          <FloorRow $root><Caret $color="#888" /><Box $line="#bbb" />全部楼层</FloorRow>
          {['第4层', '第3层', '第2层', '首层'].map((f) => (
            <FloorRow key={f}><Box $line="#bbb" />{f}</FloorRow>
          ))}
          <FloorRow>
            <Box $line="#bbb">
              <Glyph $box="0 0 14 14" $size={12} $color="#999" $sw={1.300}><path d="M2.500 7l3 3.500 6-7" /></Glyph>
            </Box>
            基础层
          </FloorRow>
        </FloorTree>
        <FloorBottom><Box />其他区域图元亮显</FloorBottom>
      </RightPanel>
    </Main>
    <Status>
      <StatusText $w={83}>层高: 1.15</StatusText>
      <StatusText $w={132}>标高: -1.2~-0.05</StatusText>
      <StatusText $w={103}>选中图元: 0</StatusText>
      <StatusText $w={104}>隐藏图元: 0</StatusText>
      <SnapBtn $on $w={24} $mr={5}>
        <Glyph $box="0 0 16 16" $size={15} $sw={1.200}><path d="M3 1v12h11M3 9h4v4" /></Glyph>
      </SnapBtn>
      <SnapBtn $on $w={35} $mr={6}>
        <Glyph $box="0 0 16 16" $size={15} $color={GREY} $sw={1}><rect x="2" y="2" width="12" height="12" rx="1" /></Glyph>
        <Caret $color="#555" />
      </SnapBtn>
      <SnapBtn $w={23} $mr={8}>
        <Glyph $box="0 0 16 16" $size={15} $color={GREY} $sw={1}><path d="M2 1l12 14M14 1L2 15" /></Glyph>
      </SnapBtn>
      <SnapBtn $w={36} $mr={3}>
        <Glyph $box="0 0 16 16" $size={15} $color={GREY} $sw={1}><path d="M12 2L3 13h11" /><path d="M5 15h9" stroke={BLUE} /></Glyph>
        <Caret $color="#555" />
      </SnapBtn>
      <SnapBtn $w={36} $mr={3}>
        <Glyph $box="0 0 16 16" $size={15} $color={GREY} $sw={1}><path d="M2 5h6M5 2v6" /><rect x="7" y="10" width="7" height="3" fill={GREY} /></Glyph>
        <Caret $color="#555" />
      </SnapBtn>
      <SnapBtn $w={25} $mr={3}>
        <Glyph $box="0 0 16 16" $size={15} $color={GREY} $sw={1}><rect x="3" y="2" width="8" height="11" /><rect x="8" y="6" width="5" height="8" fill={GREY} /></Glyph>
      </SnapBtn>
      <SnapBtn $w={26} $mr={9}>
        <Glyph $box="0 0 16 16" $size={15} $color={GREY} $sw={1}><path d="M3 14V8c0-3 3-5 6-5h2M9 8l3 5-4 0" /></Glyph>
      </SnapBtn>
      <Glyph $box="0 0 16 16" $size={16} $color={GREY} $sw={1.100}><path d="M2 14L14 2M9 2h5v5M2 9v5h5" /></Glyph>
      <StatusHint>指定第一点</StatusHint>
    </Status>
    <Taskbar>
      <StartSlot>
        <svg width="16" height="16" viewBox="0 0 16 16" fill="#111"><path d="M0 2.300l6.500-.9v6.200H0zM7.300 1.300L16 0v7.600H7.300zM0 8.400h6.500v6.200L0 13.700zM7.300 8.400H16V16l-8.700-1.200z" /></svg>
      </StartSlot>
      <TaskSearch>
        <Glyph $box="0 0 18 18" $size={18} $color="#222" $sw={1.300}><circle cx="11" cy="7" r="5" /><path d="M7.500 11L2 17" /></Glyph>
        <span>在这里输入你要搜索的内容</span>
        <Landscape width="80" height="39" viewBox="0 0 92 40">
          <path d="M20 10c1-4 8-6 10-1 3-1 6 1 5 4H20c-3 0-3-3 0-3z" fill="#c4d2de" />
          <path d="M46 2l1 4 4 1-4 2-2 4-1-4-4-1 4-2z" fill="#dc86ee" />
          <circle cx="16" cy="26" r="2" fill="#3fd27a" />
          <circle cx="87" cy="8" r="2" fill="#f2a81e" />
          <path d="M12 40c4-12 14-20 30-24 12-8 30-7 50 0v24z" fill="#8fb23c" />
          <path d="M12 40c3-8 8-13 14-16 4 4 8 10 8 16z" fill="#3fa9df" />
          <path d="M38 30c14-4 34-12 54-12v6c-14 0-26 4-34 10-6 3-10 5-14 6h-10c4-2 6-5 4-10z" fill="#45aee0" />
          <path d="M56 16l10-11 10 9-4 4zM26 36l6-8 6 6-2 6zM46 26l7-7 7 6-6 4z" fill="#5f7d2a" />
          <path d="M66 5l10 9-6 2z" fill="#c8894a" />
        </Landscape>
      </TaskSearch>
      <TaskSlot>
        <svg width="18" height="18" viewBox="0 0 18 18"><circle cx="9" cy="9" r="7" fill="none" stroke="#111" strokeWidth="2" /></svg>
      </TaskSlot>
      <TaskSlot>
        <Glyph $box="0 0 18 18" $size={18} $color="#111" $sw={1.300}><path d="M2 2h11M2 16h11M4 6h9v6H4zM16 4v3M16 10v6" /></Glyph>
      </TaskSlot>
      <TaskSlot $run $multi $ml={2}>
        <svg width="24" height="22" viewBox="0 0 24 22"><path d="M1 1h8l2 3H1z" fill="#e8a820" /><rect x="1" y="4" width="22" height="17" fill="#fbd561" /><path d="M4 21v-8h16v8h-5v-5H9v5z" fill="#2a8bdc" /></svg>
      </TaskSlot>
      <TaskSlot $run>
        <svg width="24" height="24" viewBox="0 0 24 24"><rect x="0.500" y="0.500" width="23" height="23" rx="2" fill="#6f7a84" /><rect x="2" y="2" width="20" height="20" fill="#1a5eb0" /><text x="12" y="16" textAnchor="middle" fontSize="9" fontFamily="Liberation Sans" fill="#d8e8fa">CAD</text></svg>
      </TaskSlot>
      <TaskSlot $run $on>
        <svg width="24" height="24" viewBox="0 0 24 24">
          <defs><linearGradient id="tb" x1="0" y1="0" x2="0" y2="1"><stop offset="0" stopColor="#e2f5fd" /><stop offset="1" stopColor="#bfe3fa" /></linearGradient></defs>
          <rect width="24" height="24" rx="4" fill="url(#tb)" />
          <path d="M5 5h14a1.500 1.500 0 0 1 0 3.500h-4v10a2.500 2.500 0 0 1-5 0v-10H5A1.500 1.500 0 0 1 5 5z" fill="#1f9cf0" />
        </svg>
      </TaskSlot>
      <TaskSlot $run $multi>
        <svg width="24" height="20" viewBox="0 0 24 20"><path d="M0 1h5l4 9 2-5h2l2 5 4-9h5l-8 18h-2l-3-7-3 7H8z" fill="#e5372c" /></svg>
      </TaskSlot>
      <TaskSlot $run>
        <svg width="18" height="24" viewBox="0 0 18 24"><rect width="18" height="24" rx="1.500" fill="#6b7a88" /><rect x="2" y="2" width="14" height="5" fill="#62d0ee" /><g fill="#cfd8de"><rect x="2" y="9" width="4" height="3" /><rect x="7" y="9" width="4" height="3" /><rect x="2" y="14" width="4" height="3" /><rect x="7" y="14" width="4" height="3" /><rect x="2" y="19" width="4" height="3" /><rect x="7" y="19" width="4" height="3" /></g><rect x="12" y="9" width="4" height="13" fill="#1a5a90" /></svg>
      </TaskSlot>
      <TaskSlot $run>
        <svg width="25" height="25" viewBox="0 0 25 25"><circle cx="12.500" cy="12.500" r="12" fill="#1272c4" /><path d="M24.500 13C24 5 17 0 11 .5 5 1 1 6 .5 10c3-5 10-6 14-3 2 2 2 4 1 6h-5c0 3 4 5 9 4 2 0 4-2 5-4z" fill="#52d49a" /><ellipse cx="12.500" cy="16" rx="4.500" ry="4" fill="#d4d4d4" /></svg>
      </TaskSlot>
      <Tray>
        <Glyph $box="0 0 14 14" $size={12} $color="#111" $sw={1.200}><path d="M2 10l5-6 5 6" /></Glyph>
        <Glyph $box="0 0 16 16" $size={16} $color="#111" $sw={1}><path d="M2 2h12v8H2zM8 10v4M4 14h8" /><rect x="3" y="3" width="4" height="5" fill="#111" /></Glyph>
        <Glyph $box="0 0 16 16" $size={16} $color="#111" $sw={1}><path d="M2 6h2l3-3v10l-3-3H2zM10 5c1 2 1 4 0 6M12.500 3c2 3 2 7 0 10" /></Glyph>
        <Glyph $box="0 0 16 16" $size={18} $color="#111" $sw={1.100}><path d="M3 14c1-3 2-5 4-7l3-4 2 1-2 5c-1 2-3 4-7 5zM10 9c0 2 1 3 3 3" /></Glyph>
        <TrayIme>英</TrayIme>
        <Clock>23:48<br />2022/6/29</Clock>
        <Glyph $box="0 0 16 16" $size={18} $color="#111" $sw={1}><path d="M2 2h12v10H8l-2 3v-3H2z" fill="#111" /><path d="M4 5h8M4 8h8" stroke="#fff" /></Glyph>
      </Tray>
    </Taskbar>
    <Dialog>
      <DialogHead>
        截面编辑
        <Cross size={13} color="#666" />
      </DialogHead>
      <DialogRow $pl={7}>
        <RowText>选择</RowText>
        <RowSep $ml={12} />
        <Radio on ml={9}>纵筋</Radio>
        <Radio ml={24}>横筋</Radio>
        <RowSep $ml={6} />
        <LineButton $ml={8}>直线<Caret $color="#999" /></LineButton>
        <RowText $ml={8}>显示标注</RowText>
        <RowText $ml={14}>手动设置参考线</RowText>
        <Caret $ml={5} $color="#999" />
        <RowText $ml={12}>设置标高</RowText>
        <RowText $ml={15} $off>删除</RowText>
        <RowText $ml={15}>清空钢筋</RowText>
      </DialogRow>
      <DialogRow $pl={3}>
        <Radio on>水平</Radio>
        <Radio ml={24}>垂直</Radio>
        <RowSep $ml={6} />
        <RowText $ml={12}>对齐钢筋</RowText>
      </DialogRow>
      <DrawArea>
        <SectionDrawing />
        <SteelBar>
          钢筋信息:
          <SteelSelect>C8@150<Caret /></SteelSelect>
          <CheckBlue $ml={18}>
            <Glyph $box="0 0 14 14" $size={14} $color="#fff" $sw={1.800}><path d="M3 7l3 3 5-6" /></Glyph>
          </CheckBlue>
          含起点
          <CheckBlue $ml={8}>
            <Glyph $box="0 0 14 14" $size={14} $color="#fff" $sw={1.800}><path d="M3 7l3 3 5-6" /></Glyph>
          </CheckBlue>
          含终点
        </SteelBar>
      </DrawArea>
      <HintBar>
        <SnapBtn $on $h={25}><Glyph $box="0 0 16 16" $size={15} $sw={1.200}><path d="M3 1v12h11M3 9h4v4" /></Glyph></SnapBtn>
        <SnapBtn $on $h={25}><Glyph $box="0 0 16 16" $size={15} $color={GREY} $sw={1.100}><path d="M3 14L13 2" /></Glyph></SnapBtn>
        <SnapBtn $on $h={25}><Glyph $box="0 0 16 16" $size={15} $color={GREY} $sw={1.100}><path d="M8 2v11M2 13h12" /></Glyph></SnapBtn>
        <SnapBtn $h={25} $mr={0}><Glyph $box="0 0 16 16" $size={15} $sw={1.200}><path d="M2 5h6M5 2v6" /><rect x="7" y="10" width="7" height="3" fill={BLUE} /></Glyph></SnapBtn>
        {'(X: -83 Y: -378)左键或 Shift+ 左键指定下一点 （可选择线筋端点或中心点） ;按右键中止或 ESC 键取消;'}
        <Grip />
      </HintBar>
    </Dialog>
  </Screen>
)

export default App
